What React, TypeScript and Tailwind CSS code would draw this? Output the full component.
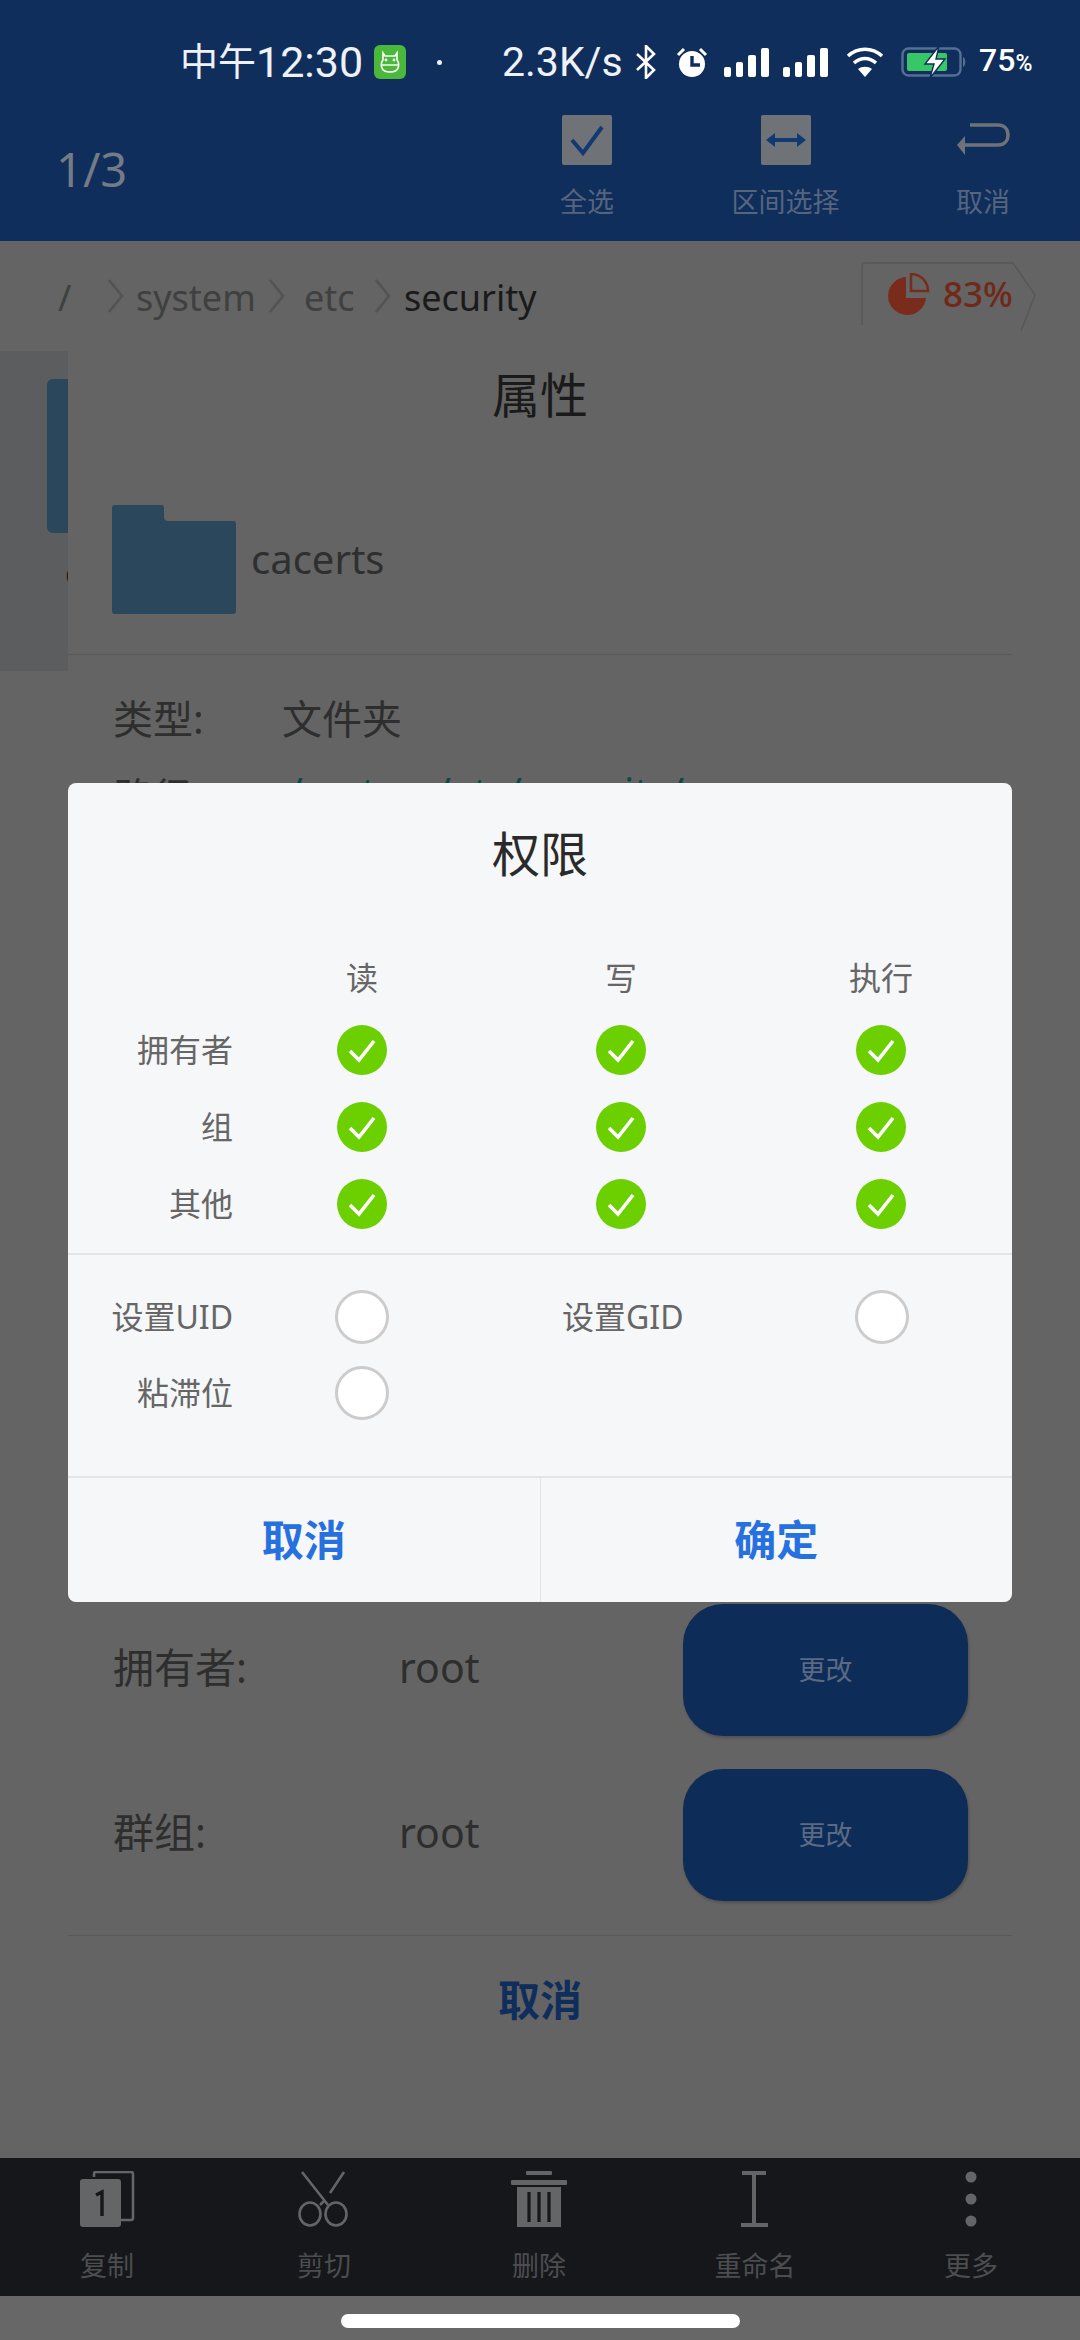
import React from "react";

const sans = "font-['Noto_Sans','Noto_Sans_CJK_SC',sans-serif]";

function StatusBar() {
  return (
    <div className="flex h-[100px] items-center pt-[24px] pl-[180px] text-[#eef1f6] font-['Roboto','Noto_Sans_CJK_SC',sans-serif]">
      <span className="flex w-[194px] shrink-0 items-center whitespace-nowrap text-[38px] leading-[44px]">
        中午<span className="text-[43px]">12:30</span>
      </span>
      <svg width="32" height="34" viewBox="0 0 32 34" className="shrink-0">
        <rect width="32" height="34" rx="6" fill="#4ab83a" />
        <path d="M9 8l2 3h10l2-3v7c2 2 2 6 1 8-1 3-4 4-8 4s-7-1-8-4c-1-2-1-6 1-8z" fill="none" stroke="#fff" strokeWidth="1.6" />
        <path d="M8 20h16" stroke="#fff" strokeWidth="1.4" />
        <circle cx="12" cy="15" r="1.4" fill="#fff" />
        <circle cx="20" cy="15" r="1.4" fill="#fff" />
      </svg>
      <span className="ml-[31px] h-[5px] w-[5px] shrink-0 rounded-full bg-[#eef1f6]" />
      <span className="ml-[60px] w-[128px] shrink-0 text-[41px] leading-[44px] whitespace-nowrap">2.3K/s</span>
      <svg width="22" height="34" viewBox="0 0 22 34" className="ml-[5px] shrink-0" fill="none" stroke="#fff" strokeWidth="2.6">
        <path d="M2 9l17 16-8 8V1l8 8L2 25" />
      </svg>
      <svg width="32" height="31" viewBox="0 0 32 31" className="ml-[19px] shrink-0">
        <circle cx="16" cy="17" r="13" fill="#fff" />
        <path d="M16 9v9h8" stroke="#0f2e5c" strokeWidth="3.4" fill="none" />
        <path d="M2 8l6-6M30 8l-6-6" stroke="#fff" strokeWidth="3" />
      </svg>
      <Signal className="ml-[16px]" />
      <Signal className="ml-[14px]" />
      <svg width="38" height="30" viewBox="0 0 38 30" className="ml-[18px] shrink-0" fill="none" stroke="#fff" strokeWidth="3.6">
        <path d="M2 9c10-9 24-9 34 0" />
        <path d="M8 16c7-6 15-6 22 0" />
        <path d="M19 30l-7-8c4-3 10-3 14 0z" fill="#fff" stroke="none" />
      </svg>
      <svg width="66" height="32" viewBox="0 0 66 32" className="ml-[17px] shrink-0">
        <rect x="1.5" y="2.5" width="58" height="27" rx="6" fill="none" stroke="#566f94" strokeWidth="2.4" />
        <path d="M62 11c3 1 3 9 0 10z" fill="#566f94" />
        <rect x="6" y="7" width="40" height="18" rx="2" fill="#37c767" />
        <path d="M38 0L24 18h9l-4 14 15-19h-9z" fill="#fff" stroke="#0f2e5c" strokeWidth="1.4" />
      </svg>
      <span className="ml-[12px] flex items-baseline font-medium text-white whitespace-nowrap">
        <span className="text-[32px] leading-[32px]">75</span>
        <span className="text-[23px] leading-[32px]">%</span>
      </span>
    </div>
  );
}

function Signal({ className }: { className: string }) {
  return (
    <div className={`flex h-[29px] w-[45px] shrink-0 items-end justify-between ${className}`}>
      <span className="h-[10px] w-[7px] rounded-[2px] bg-white" />
      <span className="h-[15px] w-[7px] rounded-[2px] bg-white" />
      <span className="h-[22px] w-[8px] rounded-[2px] bg-white" />
      <span className="h-[29px] w-[8px] rounded-[2px] bg-white" />
    </div>
  );
}

function TopAction({ label, icon, className }: { label: string; icon: React.ReactNode; className: string }) {
  return (
    <div className={`flex flex-col items-center ${className}`}>
      <div className="flex h-[50px] items-center justify-center">{icon}</div>
      <span className="mt-[21px] text-[27px] leading-[32px] text-[#56657e] whitespace-nowrap">{label}</span>
    </div>
  );
}

function Toolbar() {
  return (
    <div className="flex h-[141px] items-start pt-[15px]">
      <span className="ml-[56px] mt-[24px] w-[504px] shrink-0 text-[47px] leading-[60px] text-[#757b85]">1/3</span>
      <TopAction
        label="全选"
        className="w-[54px]"
        icon={
          <svg width="50" height="50" viewBox="0 0 50 50">
            <rect width="50" height="50" rx="2" fill="#6f7378" />
            <path d="M10 25l11 13 19-26" fill="none" stroke="#123a72" strokeWidth="4" />
          </svg>
        }
      />
      <TopAction
        label="区间选择"
        className="ml-[117px] w-[109px]"
        icon={
          <svg width="50" height="50" viewBox="0 0 50 50">
            <rect width="50" height="50" rx="2" fill="#6f7378" />
            <path d="M12 25h26" stroke="#123a72" strokeWidth="4" />
            <path d="M5 25l9-7v14zM45 25l-9-7v14z" fill="#123a72" />
          </svg>
        }
      />
      <TopAction
        label="取消"
        className="ml-[116px] w-[54px]"
        icon={
          <svg width="54" height="34" viewBox="0 0 54 34" fill="none" stroke="#6f7378" strokeWidth="3.5">
            <path d="M14 2h28c6 0 10 4 10 10s-4 10-10 10H6" />
            <path d="M9 13L1 22l8 10z" fill="#6f7378" stroke="none" />
          </svg>
        }
      />
    </div>
  );
}

function Crumb() {
  return (
    <svg width="18" height="34" viewBox="0 0 18 34" className="shrink-0" fill="none" stroke="#525352" strokeWidth="2.6">
      <path d="M2 1l13 16L2 33" />
    </svg>
  );
}

function Breadcrumb() {
  return (
    <div className="relative flex h-[110px] items-start pl-[58px] pt-[38px]">
      <span className="w-[49px] shrink-0 text-[36px] leading-[38px] text-[#3f403f]">/</span>
      <Crumb />
      <span className="ml-[11px] w-[132px] shrink-0 text-[36px] leading-[38px] text-[#3f403f]">system</span>
      <Crumb />
      <span className="ml-[18px] w-[70px] shrink-0 text-[36px] leading-[38px] text-[#3f403f]">etc</span>
      <Crumb />
      <span className="ml-[12px] text-[36px] leading-[38px] text-[#1a1a1a]">security</span>
      <div className="absolute left-[861px] top-[21px] flex h-[63px] w-[175px] items-center pl-[27px]">
        <svg width="175" height="70" viewBox="0 0 175 70" className="absolute left-0 top-0" fill="none" stroke="#575857" strokeWidth="1.5">
          <path d="M1 63V4q0-3 3-3h148l22 32-14 36" />
        </svg>
        <svg width="42" height="42" viewBox="0 0 42 42" className="shrink-0">
          <path d="M18 4a19 19 0 1 0 20 21H18z" fill="#7a2c1c" />
          <path d="M23 1v17h17a17 17 0 0 0-17-17z" fill="none" stroke="#7a2c1c" strokeWidth="2.5" />
        </svg>
        <span className="ml-[13px] text-[35px] font-medium leading-[40px] text-[#702818]">83%</span>
      </div>
    </div>
  );
}

function BottomItem({ label, icon, className }: { label: string; icon: React.ReactNode; className: string }) {
  return (
    <div className={`flex w-[120px] flex-col items-center ${className}`}>
      <div className="flex h-[56px] items-center justify-center">{icon}</div>
      <span className="mt-[24px] text-[27px] leading-[30px] text-[#4c4d4f] whitespace-nowrap">{label}</span>
    </div>
  );
}

function BottomBar() {
  const c = "#646566";
  return (
    <div className="flex h-[138px] items-start bg-[#16171b] pt-[13px]">
      <BottomItem
        label="复制"
        className="ml-[47px]"
        icon={
          <svg width="56" height="56" viewBox="0 0 56 56">
            <path d="M15 6V3q0-2 2-2h35q2 0 2 2v44q0 2-2 2h-10" fill="none" stroke={c} strokeWidth="2.6" />
            <rect x="1" y="8" width="41" height="48" rx="3" fill={c} />
            <path d="M17 24l6-3v24" fill="none" stroke="#16171b" strokeWidth="3.4" />
          </svg>
        }
      />
      <BottomItem
        label="剪切"
        className="ml-[97px]"
        icon={
          <svg width="54" height="56" viewBox="0 0 54 56" fill="none" stroke={c} strokeWidth="2.6">
            <path d="M5 1l26 33M47 1L33 22M27 30l-4 4" />
            <ellipse cx="13" cy="43" rx="10.5" ry="11.5" />
            <ellipse cx="39" cy="43" rx="10.5" ry="11.5" />
          </svg>
        }
      />
      <BottomItem
        label="删除"
        className="ml-[95px]"
        icon={
          <svg width="56" height="56" viewBox="0 0 56 56">
            <rect x="15" y="0" width="26" height="4" rx="1" fill={c} />
            <rect x="0" y="9" width="56" height="5" rx="1" fill={c} />
            <path d="M6 16h44v40H6z" fill={c} />
            <path d="M18 21v30M28 21v30M38 21v30" stroke="#16171b" strokeWidth="3.2" />
          </svg>
        }
      />
      <BottomItem
        label="重命名"
        className="ml-[96px]"
        icon={
          <svg width="28" height="56" viewBox="0 0 28 56" fill={c}>
            <rect x="1" y="0" width="24" height="4" />
            <rect x="11" y="4" width="4" height="48" />
            <rect x="0" y="52" width="27" height="4" />
          </svg>
        }
      />
      <BottomItem
        label="更多"
        className="ml-[96px]"
        icon={
          <svg width="12" height="56" viewBox="0 0 12 56" fill={c}>
            <ellipse cx="6" cy="6" rx="5.5" ry="5.5" />
            <ellipse cx="6" cy="28" rx="5.5" ry="5.5" />
            <ellipse cx="6" cy="50" rx="5.5" ry="5.5" />
          </svg>
        }
      />
    </div>
  );
}

function OwnerRow({ label, className }: { label: string; className: string }) {
  return (
    <div className={`flex h-[132px] items-center pl-[45px] ${className}`}>
      <span className="mb-[6px] w-[286px] shrink-0 text-[41px] leading-[48px] text-[#2e2e2e]">{label}</span>
      <span className="mb-[6px] text-[41px] leading-[48px] text-[#2e2e2e]">root</span>
      <div className="ml-auto mr-[44px] flex h-[132px] w-[285px] items-center justify-center rounded-[40px] bg-[#0e2c58] text-[27px] leading-[32px] text-[#5a6a84] shadow-[1px_2px_3px_rgba(0,0,0,0.2)]">
        更改
      </div>
    </div>
  );
}

// the dimmed sheet under the dialog
function PropertiesSheet() {
  return (
    <div className="absolute left-[68px] top-[325px] flex h-[1800px] w-[944px] flex-col bg-[#646464]">
      <div className="pt-[34px] text-center text-[48px] leading-[72px] text-[#1a1a1a]">属性</div>
      <div className="mt-[73px] flex h-[110px] items-center pl-[44px]">
        <svg width="124" height="109" viewBox="0 0 124 109" className="shrink-0">
          <path d="M3 0h46q3 0 3 3v9q0 4 4 4h65q3 0 3 3v87q0 3-3 3H3q-3 0-3-3V3q0-3 3-3z" fill="#2a475c" />
        </svg>
        <span className="ml-[15px] text-[40px] leading-[48px] text-[#2f2f2f]">cacerts</span>
      </div>
      <div className="mt-[40px] h-px bg-[#585958]" />
      <div className="mt-[40px] flex pl-[45px]">
        <span className="w-[169px] text-[40px] leading-[48px] text-[#2e2e2e]">类型:</span>
        <span className="text-[40px] leading-[48px] text-[#2e2e2e]">文件夹</span>
      </div>
      <div className="mt-[30px] flex items-start pl-[45px]">
        <span className="w-[175px] text-[40px] leading-[48px] text-[#2e2e2e]">路径:</span>
        <span className="-mt-[5px] text-[40px] leading-[48px] text-[#0c4a42]">/system/etc/security/</span>
      </div>
      <OwnerRow label="拥有者:" className="mt-[783px]" />
      <OwnerRow label="群组:" className="mt-[33px]" />
      <div className="mt-[34px] h-px bg-[#585958]" />
      <div className="pt-[40px] text-center text-[42px] font-bold leading-[48px] text-[#0f2e5c]">取消</div>
    </div>
  );
}

function Checked() {
  return (
    <svg width="50" height="50" viewBox="0 0 50 50" className="block shrink-0">
      <circle cx="25" cy="25" r="25" fill="#6ccf00" />
      <path d="M13 26l9 9 15-19" fill="none" stroke="#fff" strokeWidth="3.6" />
    </svg>
  );
}

function Radio() {
  return <span className="block h-[54px] w-[54px] shrink-0 rounded-full border-[3px] border-[#cccccc] bg-white" />;
}

function PermRow({ label }: { label: string }) {
  return (
    <div className="flex h-[50px] items-center">
      <span className="w-[165px] shrink-0 text-right text-[32px] leading-[40px] text-[#666666]">{label}</span>
      <div className="ml-[104px] w-[50px]"><Checked /></div>
      <div className="ml-[209px] w-[50px]"><Checked /></div>
      <div className="ml-[210px] w-[50px]"><Checked /></div>
    </div>
  );
}

function PermissionDialog() {
  return (
    <div className="absolute left-[68px] top-[783px] flex h-[819px] w-[944px] flex-col rounded-[8px] bg-[#f5f7f9]">
      <div className="pt-[35px] text-center text-[48px] leading-[72px] text-[#2a2a2a]">权限</div>
      <div className="mt-[68px] flex h-[40px] items-center text-[32px] leading-[40px] text-[#666666]">
        <span className="ml-[244px] w-[100px] text-center">读</span>
        <span className="ml-[159px] w-[100px] text-center">写</span>
        <span className="ml-[160px] w-[100px] text-center">执行</span>
      </div>
      <div className="mt-[27px] flex flex-col gap-[27px]">
        <PermRow label="拥有者" />
        <PermRow label="组" />
        <PermRow label="其他" />
      </div>
      <div className="mt-[24px] h-[2px] bg-[#e2e4e7]" />
      <div className="mt-[35px] flex h-[54px] items-center">
        <span className="w-[165px] shrink-0 whitespace-nowrap text-right text-[32px] leading-[40px] text-[#666666]">设置UID</span>
        <div className="ml-[102px]"><Radio /></div>
        <span className="ml-[173px] w-[121px] shrink-0 whitespace-nowrap text-[32px] leading-[40px] text-[#666666]">设置GID</span>
        <div className="ml-[172px]"><Radio /></div>
      </div>
      <div className="mt-[22px] flex h-[54px] items-center">
        <span className="w-[165px] shrink-0 text-right text-[32px] leading-[40px] text-[#666666]">粘滞位</span>
        <div className="ml-[102px]"><Radio /></div>
      </div>
      <div className="mt-[56px] flex flex-1 border-t-2 border-[#e2e4e7]">
        <div className="flex flex-1 items-center justify-center border-r border-[#e2e4e7] text-[42px] font-bold leading-[48px] text-[#2670e0]">取消</div>
        <div className="flex flex-1 items-center justify-center text-[42px] font-bold leading-[48px] text-[#2670e0]">确定</div>
      </div>
    </div>
  );
}

export default function App() {
  return (
    <div className={`relative flex h-[2340px] w-[1080px] flex-col overflow-hidden bg-[#636463] ${sans}`}>
      <div className="h-[241px] bg-[#0f2e5c]">
        <StatusBar />
        <Toolbar />
      </div>
      <Breadcrumb />
      <div className="flex-1">
        {/* selected list item, mostly hidden behind the sheet */}
        <div className="h-[320px] w-[68px] bg-[#5c5d5f] pl-[47px] pt-[28px]">
          <div className="h-[154px] w-[21px] rounded-l-[6px] bg-[#2a475c]" />
          <div className="ml-[18px] mt-[20px] whitespace-nowrap text-[32px] leading-[40px] text-[#1a1a1a]">cacerts</div>
        </div>
      </div>
      <BottomBar />
      <div className="flex h-[44px] items-start justify-center bg-[#676767] pt-[18px]">
        <div className="h-[14px] w-[399px] rounded-full bg-white" />
      </div>
      <PropertiesSheet />
      <PermissionDialog />
    </div>
  );
}
